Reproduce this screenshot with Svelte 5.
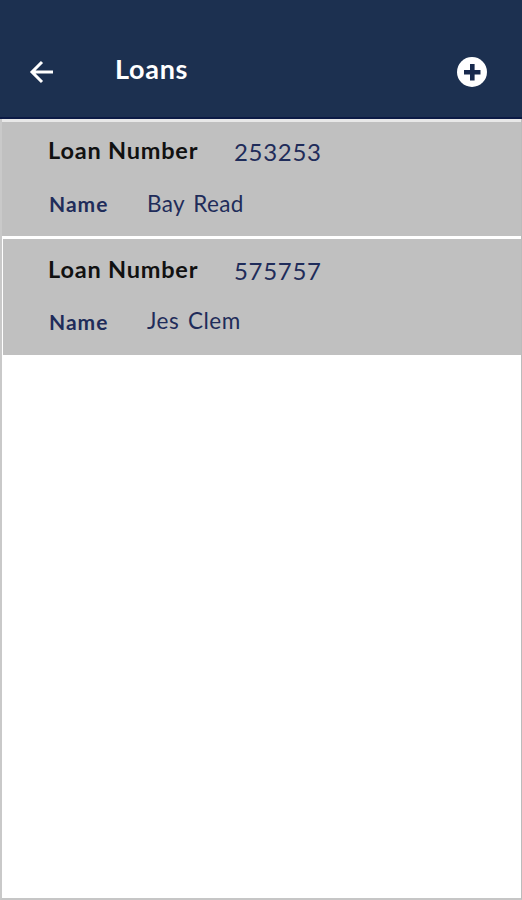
<script>
  let title = 'Loans';

  let loans = [
    { number: '253253', name: 'Bay Read' },
    { number: '575757', name: 'Jes Clem' }
  ];
</script>

<main class="screen">
  <header>
    <button class="back" aria-label="Back">
      <svg width="24" height="24" viewBox="0 0 24 24" fill="none" stroke="#fff" stroke-width="3">
        <path d="M24 12H3.5M13 2L3 12L13 22" />
      </svg>
    </button>
    <h1>{title}</h1>
    <button class="add" aria-label="Add loan">
      <svg width="30" height="30" viewBox="0 0 30 30">
        <circle cx="15" cy="15" r="15" fill="#fff" />
        <path d="M15.3 7V23.5M7 15.2H23.5" stroke="#17294d" stroke-width="4.6" />
      </svg>
    </button>
  </header>

  <div class="loans">
    {#each loans as loan}
      <div class="loan">
        <div class="row">
          <span class="number-label">Loan Number</span>
          <span class="number">{loan.number}</span>
        </div>
        <div class="row">
          <span class="name-label">Name</span>
          <span class="name">{loan.name}</span>
        </div>
      </div>
    {/each}
  </div>
</main>

<style>
  .screen {
    box-sizing: border-box;
    height: 900px;
    background: #fff;
    border-left: 2px solid #c9c9c9;
    border-right: 1px solid #bbb;
    border-bottom: 2px solid #c6c6c6;
    font-family: Lato, sans-serif;
  }

  header {
    box-sizing: border-box;
    display: flex;
    align-items: center;
    height: 119px;
    margin: 0 -1px 0 -2px;
    padding: 26px 35px 0 29px;
    background: #1c3050;
    border-bottom: 2px solid #0b1a45;
  }

  button {
    display: flex;
    padding: 0;
    border: none;
    background: none;
  }

  h1 {
    flex: 1;
    margin: 0 0 5px 62px;
    color: #fff;
    font-size: 27px;
    line-height: 32px;
    font-weight: 700;
    letter-spacing: 0.7px;
  }

  .loans {
    display: flex;
    flex-direction: column;
    gap: 3px;
    border-top: 3px solid #e8e8e8;
  }

  .loan {
    box-sizing: border-box;
    height: 114px;
    padding: 13px 0 0 46px;
    background: #c0c0c0;
  }

  .loan + .loan {
    height: 116px;
    padding-top: 15px;
    margin-left: 1px;
    padding-left: 45px;
  }

  .row {
    display: flex;
    height: 32px;
    line-height: 32px;
    margin-bottom: 20px;
    color: #1f2c5a;
    white-space: nowrap;
  }

  .number-label {
    width: 186px;
    line-height: 30px;
    color: #111;
    font-size: 23.5px;
    font-weight: 700;
    letter-spacing: 0.8px;
  }

  .number {
    line-height: 34px;
    font-size: 24px;
    letter-spacing: 0.7px;
  }

  .name-label {
    width: 98px;
    padding-left: 1px;
    line-height: 33px;
    font-size: 21px;
    font-weight: 700;
    letter-spacing: 1px;
  }

  .name {
    line-height: 34px;
    font-size: 22.5px;
    letter-spacing: 0.4px;
    word-spacing: 2.5px;
  }

  .loan + .loan .name-label {
    line-height: 31px;
  }

  .loan + .loan .name {
    line-height: 30px;
    letter-spacing: 0.5px;
  }
</style>
